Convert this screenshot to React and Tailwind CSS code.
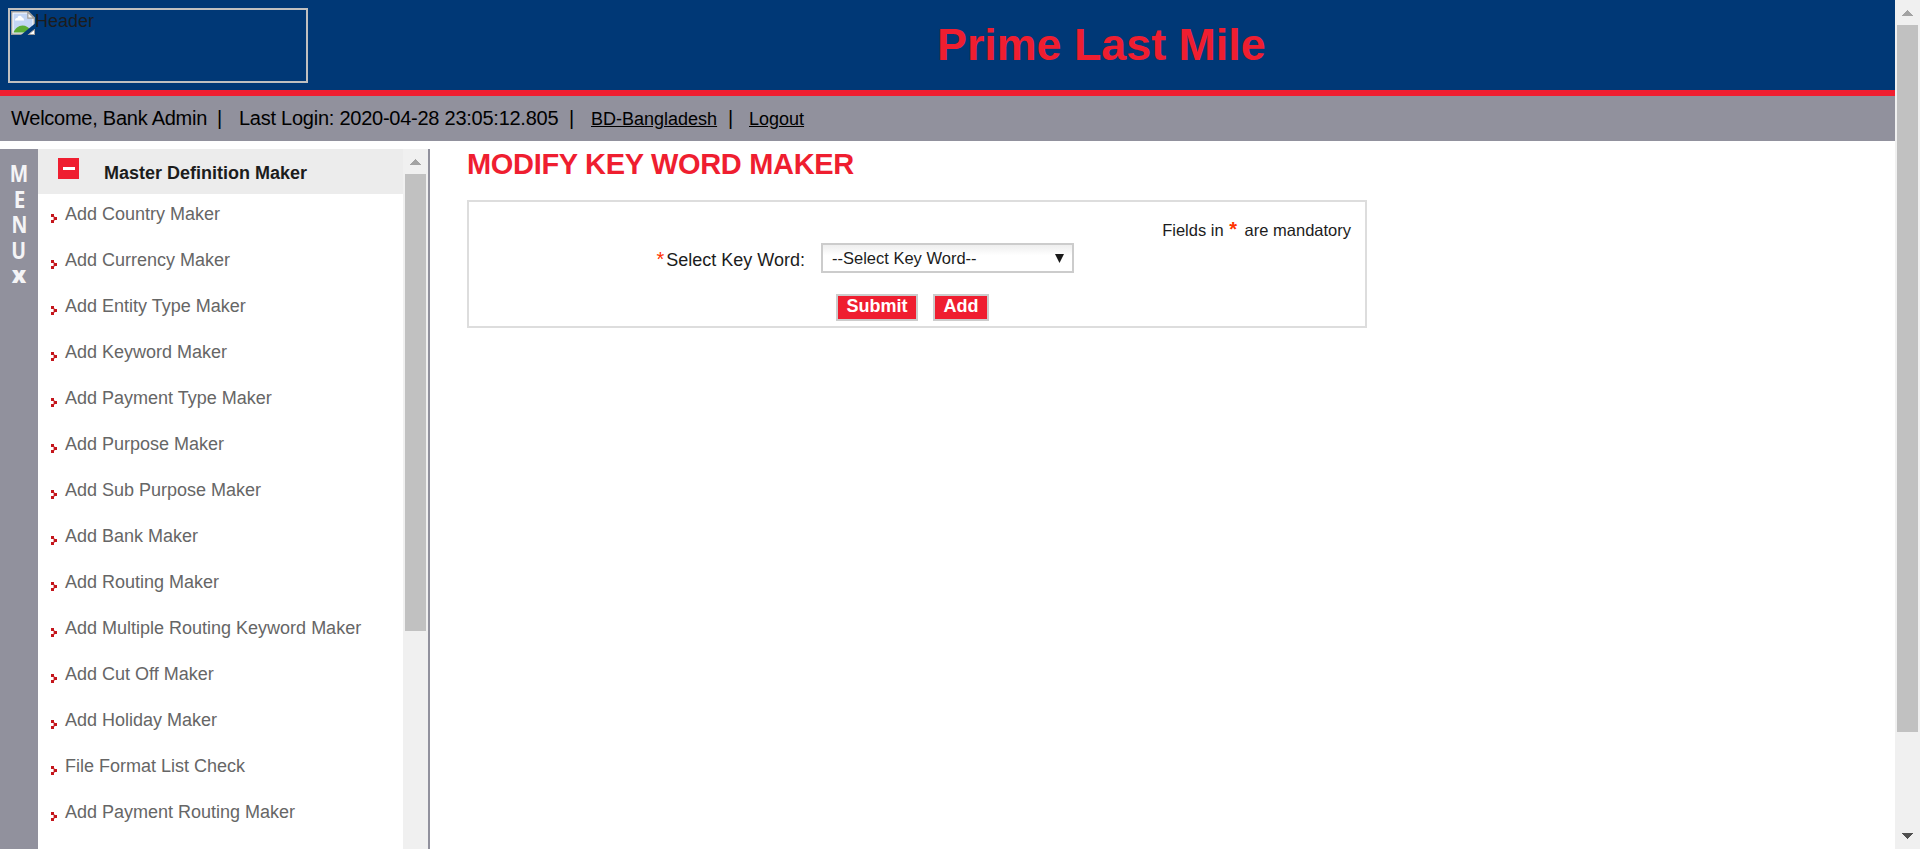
const items = [
  "Add Country Maker",
  "Add Currency Maker",
  "Add Entity Type Maker",
  "Add Keyword Maker",
  "Add Payment Type Maker",
  "Add Purpose Maker",
  "Add Sub Purpose Maker",
  "Add Bank Maker",
  "Add Routing Maker",
  "Add Multiple Routing Keyword Maker",
  "Add Cut Off Maker",
  "Add Holiday Maker",
  "File Format List Check",
  "Add Payment Routing Maker",
];

function Bullet() {
  return (
    <svg className="mt-5 h-[9px] w-[6px] shrink-0" viewBox="0 0 6 9" shapeRendering="crispEdges">
      <path fill="#c4161c" d="M0 0h3v3H0zM3 3h3v3H3zM0 6h3v3H0z" />
      <path fill="#e9a3a5" d="M3 2h1v1H3zM3 6h1v1H3zM2 3h1v3H2z" />
    </svg>
  );
}

function UpArrow() {
  return (
    <svg className="h-[6px] w-[11px]" viewBox="0 0 11 6" shapeRendering="crispEdges">
      <path fill="#a3a3a3" d="M5 0h1v1H5zM4 1h3v1H4zM3 2h5v1H3zM2 3h7v1H2zM1 4h9v1H1zM0 5h11v1H0z" />
    </svg>
  );
}

function BrokenImage() {
  return (
    <svg className="h-[24px] w-[24px] shrink-0" viewBox="0 0 24 24">
      <path fill="#fff" stroke="#9b9b9b" strokeWidth="1.4" d="M.7.7h16.6l6 6v16.6H.7z" />
      <path fill="#c3d6f5" d="M2.5 2.5h14v5h5v14h-19z" />
      <path fill="#fff" d="M4 9.5c0-2 1-2.500 2.500-2.500 0-3 4-3 4.500-.5 1.500 0 2 1.500 2 3z" />
      <path fill="#5aac35" d="M2.500 21.500c1.500-4 5-7 9-7 3.500 0 6 2 7 3.500l-4 3.500z" />
      <path fill="#f4f4f4" stroke="#9b9b9b" strokeWidth="1.200" d="M16.800 1v6.200H23z" />
      <path fill="#003876" d="M24 12.500v5.500L16.500 24H10z" />
      <path fill="#fff" stroke="#9b9b9b" strokeWidth="1" d="M17.500 23.500l6-5v5z" />
    </svg>
  );
}

export default function App() {
  return (
    <div className="flex h-[849px] w-[1920px] overflow-hidden bg-white font-['Liberation_Sans',Arial,sans-serif] text-[#1c1c1c]">
      <div className="flex w-[1895px] flex-col">
        <header className="flex h-[96px] shrink-0 border-b-[6px] border-[#ef1e30] bg-[#003876]">
          <div className="mt-2 ml-2 flex h-[75px] w-[300px] items-start border-2 border-[#c0c0c0] pt-px pl-px">
            <BrokenImage />
            <span className="text-[18px] leading-[21px]">Header</span>
          </div>
          <h1 className="mt-[18px] ml-[629px] text-[44.8px] leading-[52px] font-bold whitespace-nowrap text-[#ef1e30]">Prime Last Mile</h1>
        </header>
        <div className="flex h-[45px] shrink-0 items-baseline bg-[#91919d] pt-[9px] pl-[11px] text-[20px] leading-[26px] tracking-[-0.25px] whitespace-pre text-black">
          <span className="w-[206px]">Welcome, Bank Admin</span>
          <span className="w-[22px]">|</span>
          <span className="w-[330px]">Last Login: 2020-04-28 23:05:12.805</span>
          <span className="w-[22px]">|</span>
          <a className="w-[137px] text-[18px] tracking-normal underline">BD-Bangladesh</a>
          <span className="w-[21px]">|</span>
          <a className="text-[18px] tracking-normal underline">Logout</a>
        </div>
        <div className="flex min-h-0 flex-1 pt-2">
          <aside className="flex w-[430px] shrink-0 border-r-2 border-[#91919d]">
            <div className="flex w-[38px] flex-col items-center bg-[#91919d] pt-[12px] font-['Open_Sans',sans-serif] text-[23px] leading-[25.5px] font-bold text-[#f4f4f6]">
              <span className="scale-x-85">M</span>
              <span className="scale-x-90">E</span>
              <span className="scale-x-85">N</span>
              <span className="scale-x-85">U</span>
              <span className="-mt-px font-extrabold">x</span>
            </div>
            <nav className="w-[365px]">
              <div className="flex h-[45px] bg-[#ececec] pl-5">
                <div className="mt-[9px] flex h-[21px] w-[21px] justify-center bg-[#ef1e30]">
                  <div className="mt-[9px] h-[3px] w-[12px] bg-white" />
                </div>
                <span className="mt-[13px] ml-[25px] text-[18px] leading-[22px] font-bold">Master Definition Maker</span>
              </div>
              <ul>
                {items.map((t) => (
                  <li key={t} className="flex h-[46px] pl-[13px]">
                    <Bullet />
                    <span className="mt-[9px] ml-2 text-[18px] leading-[22px] whitespace-nowrap text-[#666]">{t}</span>
                  </li>
                ))}
              </ul>
            </nav>
            <div className="flex w-[25px] flex-col items-center bg-[#f0f0f0] pt-[10px]">
              <UpArrow />
              <div className="mt-[9px] h-[457px] w-[21px] bg-[#c1c1c1]" />
            </div>
          </aside>
          <main className="pl-[37px]">
            <h2 className="h-[51px] text-[29px] leading-[31px] font-bold tracking-[-0.32px] whitespace-nowrap text-[#ef1e30]">MODIFY KEY WORD MAKER</h2>
            <form className="flex h-[128px] w-[900px] flex-col border-2 border-[#ddd]">
              <p className="mt-[17px] flex h-[24px] justify-end pr-[14px] text-[16.5px] leading-[22px] whitespace-pre">
                <span>Fields in </span>
                <span className="mr-[3px] ml-px text-[20px] leading-[20px] font-bold text-[#ff3300]">*</span>
                <span> are mandatory</span>
              </p>
              <div className="flex h-[30px]">
                <label className="flex w-[352px] justify-end pt-[6px] pr-[16px] text-[18px] leading-[22px] whitespace-nowrap">
                  <span className="mr-0.5 text-[20px] leading-[20px] text-[#ff3300]">*</span>
                  <span>Select Key Word:</span>
                </label>
                <div className="flex h-[30px] w-[253px] items-center justify-between border-2 border-[#ccc] bg-linear-to-b from-[#eee] to-white to-40% pr-[8px] pl-[9px] text-[16.5px] whitespace-nowrap">
                  <span>--Select Key Word--</span>
                  <svg className="h-[9px] w-[9px]" viewBox="0 0 9 9"><path fill="#1a1a1a" d="M0 0h9L4.5 9z" /></svg>
                </div>
              </div>
              <div className="mt-[21px] flex gap-[15px] pl-[367px]">
                <button type="button" className="h-[27px] w-[82px] border-2 border-[#ccc] bg-[#ef1e30] pb-0.5 text-[18px] leading-[21px] font-bold text-white">Submit</button>
                <button type="button" className="h-[27px] w-[56px] border-2 border-[#ccc] bg-[#ef1e30] pb-0.5 text-[18px] leading-[21px] font-bold text-white">Add</button>
              </div>
            </form>
          </main>
        </div>
      </div>
      <div className="flex w-[25px] flex-col items-center bg-[#f0f0f0] pt-[10px]">
        <UpArrow />
        <div className="mt-[9px] h-[707px] w-[21px] bg-[#c1c1c1]" />
        <svg className="mt-[101px] h-[6px] w-[11px]" viewBox="0 0 11 6" shapeRendering="crispEdges">
          <path fill="#505050" d="M0 0h11v1H0zM1 1h9v1H1zM2 2h7v1H2zM3 3h5v1H3zM4 4h3v1H4zM5 5h1v1H5z" />
        </svg>
      </div>
    </div>
  );
}
